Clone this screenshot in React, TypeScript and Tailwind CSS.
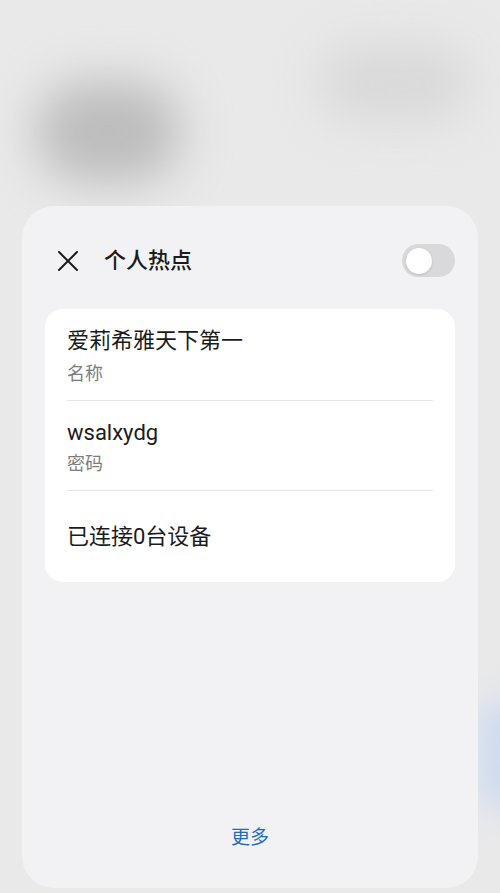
import React, { useState } from "react";

const font = { fontFamily: 'Roboto, "Noto Sans CJK SC", sans-serif' };

interface InfoRowProps {
  title: string;
  label?: string;
  tight?: boolean;
}

const InfoRow: React.FC<InfoRowProps> = ({ title, label, tight }) => {
  if (!label) {
    return (
      <div className="flex h-[91px] items-center">
        <span className="text-[22px] leading-[28px] text-[#1b1b1b]">{title}</span>
      </div>
    );
  }

  return (
    <div className="flex flex-col border-b border-[#e6e6e8] pt-[18px] pb-[14px]">
      <span className="text-[22px] leading-[28px] text-[#1b1b1b]">{title}</span>
      <span className={`${tight ? "mt-[5px]" : "mt-[7px]"} text-[18px] leading-[24px] text-[#7d7d7d]`}>{label}</span>
    </div>
  );
};

const Toggle: React.FC<{ on: boolean; onChange: (v: boolean) => void }> = ({ on, onChange }) => (
  <button
    onClick={() => onChange(!on)}
    className={`flex h-[33px] w-[53px] items-center rounded-full px-[4px] ${on ? "bg-[#1a6fd0] justify-end" : "bg-[#d9d9db] justify-start"}`}
  >
    <span className="h-[26px] w-[26px] rounded-full bg-white shadow-sm" />
  </button>
);

export default function App() {
  const [enabled, setEnabled] = useState(false);

  return (
    <div className="relative flex h-[893px] w-full flex-col overflow-hidden bg-[#e9e9ea]" style={font}>
      {/* blurred wallpaper behind the sheet */}
      <div className="pointer-events-none absolute left-[36px] top-[82px] h-[100px] w-[145px] rounded-full bg-[#bcbcbc] blur-[24px]" />
      <div className="pointer-events-none absolute left-[320px] top-[45px] h-[75px] w-[150px] rounded-full bg-[#d8d8d8] blur-[24px]" />
      <div className="pointer-events-none absolute right-[-30px] top-[700px] h-[110px] w-[50px] rounded-full bg-[#cdd9f0] blur-[16px]" />

      <div className="relative flex flex-1 flex-col px-[22px] pt-[206px] pb-[5px]">
        <div className="flex flex-1 flex-col rounded-[32px] bg-[#f2f2f4] px-[23px] pt-[38px] pb-[37px]">
          <div className="flex h-[33px] items-center">
            <button className="ml-[12px] flex h-[22px] w-[22px] items-center justify-center">
              <svg width="22" height="22" viewBox="0 0 22 22" fill="none" stroke="#1b1b1b" strokeWidth="2" strokeLinecap="round">
                <path d="M2 2 L20 20 M20 2 L2 20" />
              </svg>
            </button>
            <span className="ml-[25px] text-[22px] font-medium leading-[28px] text-[#1b1b1b]">个人热点</span>
            <div className="ml-auto">
              <Toggle on={enabled} onChange={setEnabled} />
            </div>
          </div>

          <div className="mt-[32px] rounded-[18px] bg-white px-[22px]">
            <InfoRow title="爱莉希雅天下第一" label="名称" />
            <InfoRow title="wsalxydg" label="密码" tight />
            <InfoRow title="已连接0台设备" />
          </div>

          <div className="mt-auto flex justify-center">
            <button className="text-[19px] leading-[26px] text-[#1a6cc8]">更多</button>
          </div>
        </div>
      </div>
    </div>
  );
}
